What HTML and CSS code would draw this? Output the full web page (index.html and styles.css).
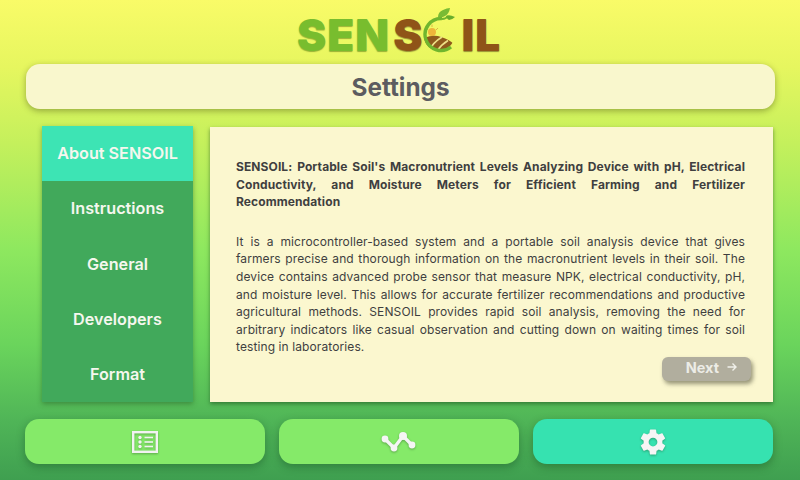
FILE: index.html
```html
<!DOCTYPE html>
<html lang="en">
<head>
<meta charset="utf-8">
<title>SENSOIL Settings</title>
<link rel="stylesheet" href="styles.css">
</head>
<body>
<div class="page">
  <div class="logo">
    <span class="logo-green">SEN</span><span class="logo-brown logo-s">S</span>
    <svg class="logo-o" width="36" height="50" viewBox="0 0 36 50">
      <defs>
        <clipPath id="field"><circle cx="17" cy="31" r="15"/></clipPath>
      </defs>
      <g clip-path="url(#field)">
        <circle cx="10" cy="27" r="4" fill="#eeb53a"/>
        <path d="M10 19.500V22M4 23 6 25M16 23 14 25" stroke="#d9b648" stroke-width="1" fill="none"/>
        <path d="M2 33 Q12 29 19 32 Q27 34 33 40 V50 H2Z" fill="#8f5a1c"/>
        <path d="M6 48 Q10 38 20 32 M13 50 Q17 41 26 35.500 M21 50 Q24 44 31 40" stroke="#ecdf86" stroke-width="1.700" fill="none"/>
      </g>
      <path d="M20 13.500 A16 16 0 1 0 29 42" fill="none" stroke="#70b62e" stroke-width="3.400"/>
      <path d="M20 14 Q24 14 26 11" fill="none" stroke="#70b62e" stroke-width="2"/>
      <path d="M16 12 Q16 7 21 5 Q25 3 28 3 Q27 9 23 11 Q20 13 16 12Z" fill="#79bb34"/>
      <path d="M24 11 Q27 9 33 12 Q30 15 27 15 Q25 14 24 11Z" fill="#68ad2c"/>
    </svg>
    <span class="logo-brown logo-il">IL</span>
  </div>

  <header class="title-bar"><h1 class="title">Settings</h1></header>

  <main class="content">
    <nav class="side">
      <a class="side-item side-item-active">About SENSOIL</a>
      <a class="side-item">Instructions</a>
      <a class="side-item">General</a>
      <a class="side-item">Developers</a>
      <a class="side-item">Format</a>
    </nav>
    <section class="panel">
      <p class="panel-head">SENSOIL: Portable Soil's Macronutrient Levels Analyzing Device with pH, Electrical Conductivity, and Moisture Meters for Efficient Farming and Fertilizer Recommendation</p>
      <p class="panel-body">It is a microcontroller-based system and a portable soil analysis device that gives farmers precise and thorough information on the macronutrient levels in their soil. The device contains advanced probe sensor that measure NPK, electrical conductivity, pH, and moisture level. This allows for accurate fertilizer recommendations and productive agricultural methods. SENSOIL provides rapid soil analysis, removing the need for arbitrary indicators like casual observation and cutting down on waiting times for soil testing in laboratories.</p>
      <button class="next">Next
        <svg width="12" height="12" viewBox="0 0 12 12"><path d="M1.500 6H10M6.500 2.500 10 6 6.500 9.500" fill="none" stroke="#f0f0ea" stroke-width="1.400"/></svg>
      </button>
    </section>
  </main>

  <footer class="tabs">
    <button class="tab">
      <svg class="icon" width="26" height="22" viewBox="0 0 26 22"><rect x="1.200" y="1.200" width="23.600" height="19.600" fill="none" stroke="#f2f2f2" stroke-width="2.400"/><g fill="#f2f2f2"><circle cx="8" cy="6.500" r="1.700"/><circle cx="8" cy="11" r="1.700"/><circle cx="8" cy="15.500" r="1.700"/><rect x="12.500" y="5.700" width="8.500" height="1.600"/><rect x="12.500" y="10.200" width="8.500" height="1.600"/><rect x="12.500" y="14.700" width="8.500" height="1.600"/></g></svg>
    </button>
    <button class="tab">
      <svg class="icon" width="36" height="22" viewBox="0 0 36 22"><path d="M4 8 13 17 22 5 31 14" fill="none" stroke="#f5f5f5" stroke-width="3.400"/><g fill="#f5f5f5"><circle cx="4" cy="8" r="3.400"/><circle cx="13" cy="17" r="3.400"/><circle cx="22" cy="5" r="4"/><circle cx="31" cy="14" r="3.400"/></g></svg>
    </button>
    <button class="tab tab-active">
      <svg class="icon" width="30" height="30" viewBox="0 0 24 24"><path fill="#f5f5f5" d="M19.400 13c.04-.32.1-.66.1-1s-.05-.68-.1-1l2.100-1.650c.2-.15.250-.42.120-.64l-2-3.460c-.12-.22-.4-.3-.6-.22l-2.500 1c-.52-.4-1.080-.73-1.700-.98l-.37-2.650A.506.506 0 0 0 14 2h-4c-.25 0-.46.180-.5.420l-.37 2.650c-.62.25-1.180.59-1.700.98l-2.500-1c-.22-.08-.48 0-.6.220l-2 3.460c-.13.220-.07.490.12.640L4.570 11c-.04.320-.07.660-.07 1s.03.680.07 1l-2.110 1.650c-.19.150-.25.420-.12.640l2 3.460c.12.220.39.300.6.220l2.500-1c.52.400 1.080.730 1.700.980l.37 2.650c.04.240.250.420.5.420h4c.25 0 .46-.180.5-.420l.37-2.650c.62-.25 1.180-.58 1.700-.98l2.500 1c.22.080.48 0 .6-.220l2-3.460c.13-.220.07-.490-.12-.640L19.400 13zM12 15.500a3.500 3.500 0 1 1 0-7 3.500 3.500 0 0 1 0 7z"/></svg>
    </button>
  </footer>
</div>
</body>
</html>
```
FILE: styles.css
```css
* { box-sizing: border-box; margin: 0; padding: 0; }
html, body { width: 800px; height: 480px; overflow: hidden; }
body {
  font-family: Inter, "Liberation Sans", sans-serif;
  background: linear-gradient(180deg, #f9fb68 0%, #e6f65f 14%, #c4f05c 30%, #8ee85f 52%, #6ad45c 72%, #4fb457 88%, #3f9f50 100%);
}
.page { display: flex; flex-direction: column; width: 800px; height: 480px; padding: 0 25px 16px; }

.logo {
  display: flex; align-items: flex-start;
  height: 64px; padding: 15px 0 0 272px;
  font-weight: 900; font-size: 44px; line-height: 40px; letter-spacing: 1px;
}
.logo-green { color: #78bd2e; text-shadow: 0 1px 1px rgba(70, 110, 10, .5); }
.logo-brown { color: #8f5418; text-shadow: 0 1px 1px rgba(70, 40, 10, .5); }
.logo-s { margin-left: 3px; }
.logo-o { margin: -10px 0 0 -1px; }
.logo-il { margin-left: 3px; }

.title-bar {
  display: flex; align-items: center; justify-content: center;
  height: 45px; margin-left: 1px; width: 749px; padding-top: 1px;
  background: #f9f7cd; border-radius: 14px;
  box-shadow: 0 2px 6px rgba(70, 80, 20, .45);
}
.title { font-size: 24.300px; font-weight: 700; color: #5c5c60; line-height: 1; }

.content { display: flex; height: 276px; margin: 17px 0 0 17px; gap: 17px; }
.side {
  display: flex; flex-direction: column; width: 151px;
  background: #41a95b; box-shadow: 0 2px 5px rgba(30, 80, 30, .45);
}
.side-item {
  display: flex; align-items: center; justify-content: center;
  height: 55.200px; padding-bottom: .6px; font-size: 16.200px; font-weight: 600; color: #f5f7ee;
}
.side-item-active { background: #3de4b4; }

.panel {
  position: relative; width: 563px; margin-top: 1px; height: 275px;
  background: #fbf7cf; padding: 31px 28px 0 26px;
  box-shadow: 0 2px 4px rgba(30, 80, 30, .6);
  font-size: 12px; line-height: 17.600px; color: #3f3f3f; text-align: justify;
}
.panel-head { font-weight: 700; letter-spacing: .1px; }
.panel-body { margin-top: 22px; letter-spacing: .1px; }

.next {
  position: absolute; right: 22px; bottom: 21px;
  display: flex; align-items: center; justify-content: flex-end; gap: 7px;
  width: 89px; height: 24px; padding: 0 13px 4px 0;
  border: 0; border-radius: 6px; background: #b1ae9e;
  font: 700 14.500px Inter, "Liberation Sans", sans-serif; color: #ecece6;
  box-shadow: 2px 3px 4px rgba(70, 70, 50, .55);
}

.tabs { display: flex; gap: 14px; margin-top: 17px; }
.tab {
  display: flex; align-items: center; justify-content: center;
  width: 240px; height: 45px; border: 0; border-radius: 14px;
  background: #85ea69; box-shadow: 0 3px 8px rgba(20, 70, 30, .4);
}
.tab-active { background: #36e2b0; }
.icon { filter: drop-shadow(0 1px 1px rgba(30, 70, 30, .4)); }
```
